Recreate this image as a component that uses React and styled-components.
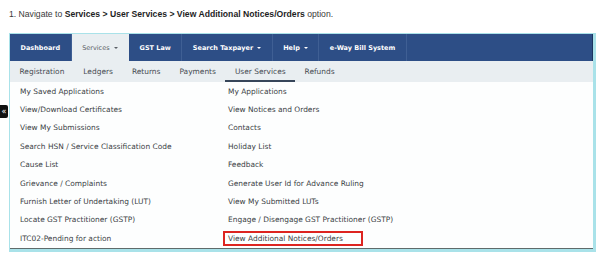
import React from 'react';
import styled, { createGlobalStyle } from 'styled-components';

const GlobalStyle = createGlobalStyle`
  html, body {
    margin: 0;
    padding: 0;
    background: #ffffff;
  }
  body {
    font-family: "DejaVu Sans", Verdana, sans-serif;
  }
`

const Page = styled.div`
  position: relative;
  width: 600px;
  height: 253px;
  overflow: hidden;
  background: #fff;
`

const Intro = styled.p`
  margin: 0;
  padding: 9px 0 0 9px;
  height: 24px;
  font-family: "Liberation Sans", Arial, sans-serif;
  font-size: 8.65px;
  line-height: 10px;
  color: #3a3a3a;

  b {
    color: #1e1e1e;
    font-weight: bold;
  }
`

const Panel = styled.div`
  margin-left: 9px;
  width: 587px;
  box-sizing: border-box;
  border: 1px solid #a9e2e9;
  border-right-width: 3px;
  border-bottom-width: 3px;
  background: #fdfefe;
`

const MainNav = styled.ul`
  display: flex;
  margin: 0;
  padding: 0;
  list-style: none;
  height: 27px;
  background: #2d4e86;
  border-right: 1px solid #1c3560;
`

const NavItem = styled.li`
  display: flex;
  align-items: center;
  padding: 0 10.5px;
  font-size: 6.5px;
  color: ${p => (p.$active ? '#5b5f66' : '#ffffff')};
  background: ${p => (p.$active ? '#e9eef1' : 'transparent')};
  border-right: 1px solid ${p => (p.$active ? '#e9eef1' : '#3f5f94')};
  font-weight: ${p => (p.$active ? 'normal' : 'bold')};
  white-space: nowrap;
`

const Caret = styled.span`
  display: inline-block;
  margin-left: 4px;
  border-left: 2.5px solid transparent;
  border-right: 2.5px solid transparent;
  border-top: 2.5px solid currentColor;
`

const SubNav = styled.ul`
  display: flex;
  margin: 0;
  padding: 0;
  list-style: none;
  height: 21px;
  background: #e9eef1;
`

const SubItem = styled.li`
  display: flex;
  align-items: center;
  padding: 2px 9.5px 0;
  font-size: 7.45px;
  color: #474c52;
  white-space: nowrap;
  box-sizing: border-box;
  border-bottom: 2px solid ${p => (p.$active ? '#37465a' : 'transparent')};
`

const MenuGrid = styled.div`
  display: grid;
  grid-template-columns: 208px 1fr;
  padding-left: 5px;
  height: 166px;
  border-bottom: 1px solid #5f6b6b;
`

const Column = styled.ul`
  margin: 0;
  padding: 0;
  list-style: none;
`

const MenuItem = styled.li`
  display: flex;
  align-items: center;
  height: 18.4px;
  font-size: 7.45px;
  color: #3b3f45;
  white-space: nowrap;
`

const ItemLabel = styled.span`
  box-sizing: border-box;
  display: flex;
  align-items: center;
  padding-left: ${p => (p.$marked ? '3px' : '5px')};
  width: ${p => (p.$marked ? '140px' : 'auto')};
  height: ${p => (p.$marked ? '15px' : 'auto')};
  border: ${p => (p.$marked ? '2px solid #dd2420' : 'none')};
`

const CollapseTab = styled.div`
  position: absolute;
  left: 0;
  top: 105px;
  width: 8px;
  height: 13px;
  background: #111;
  color: #fff;
  border-radius: 0 2px 2px 0;
  font-size: 8px;
  line-height: 13px;
  text-align: center;
`

const mainLinks = [
  { label: 'Dashboard' },
  { label: 'Services', caret: true, active: true },
  { label: 'GST Law' },
  { label: 'Search Taxpayer', caret: true },
  { label: 'Help', caret: true },
  { label: 'e-Way Bill System' },
]

const subLinks = ['Registration', 'Ledgers', 'Returns', 'Payments', 'User Services', 'Refunds']

const leftItems = [
  'My Saved Applications',
  'View/Download Certificates',
  'View My Submissions',
  'Search HSN / Service Classification Code',
  'Cause List',
  'Grievance / Complaints',
  'Furnish Letter of Undertaking (LUT)',
  'Locate GST Practitioner (GSTP)',
  'ITC02-Pending for action',
]

const rightItems = [
  'My Applications',
  'View Notices and Orders',
  'Contacts',
  'Holiday List',
  'Feedback',
  'Generate User Id for Advance Ruling',
  'View My Submitted LUTs',
  'Engage / Disengage GST Practitioner (GSTP)',
  'View Additional Notices/Orders',
]

export default function App() {
  return (
    <Page>
      <GlobalStyle />
      <Intro>
        1. Navigate to <b>Services &gt; User Services &gt; View Additional Notices/Orders</b> option.
      </Intro>
      <Panel>
        <MainNav>
          {mainLinks.map(link => (
            <NavItem key={link.label} $active={link.active}>
              {link.label}
              {link.caret && <Caret />}
            </NavItem>
          ))}
        </MainNav>
        <SubNav>
          {subLinks.map(label => (
            <SubItem key={label} $active={label === 'User Services'}>{label}</SubItem>
          ))}
        </SubNav>
        <MenuGrid>
          <Column>
            {leftItems.map(label => (
              <MenuItem key={label}><ItemLabel>{label}</ItemLabel></MenuItem>
            ))}
          </Column>
          <Column>
            {rightItems.map(label => (
              <MenuItem key={label}>
                <ItemLabel $marked={label === 'View Additional Notices/Orders'}>{label}</ItemLabel>
              </MenuItem>
            ))}
          </Column>
        </MenuGrid>
      </Panel>
      <CollapseTab>«</CollapseTab>
    </Page>
  )
}
